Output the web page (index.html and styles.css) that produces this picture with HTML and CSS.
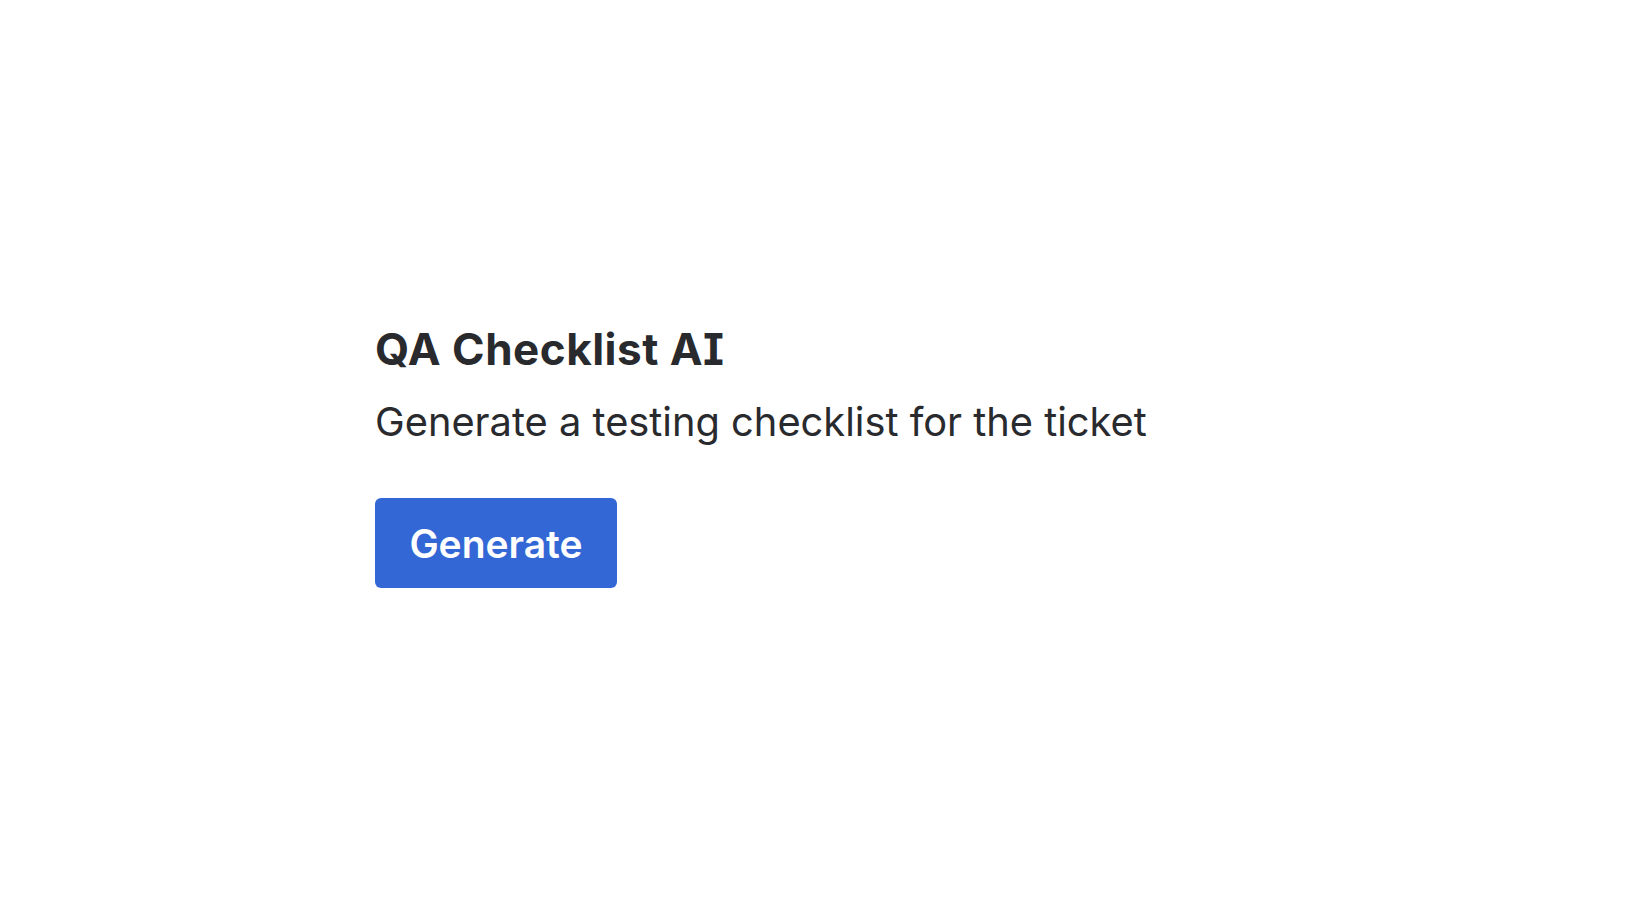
FILE: index.html
```html
<!DOCTYPE html>
<html lang="en">
<head>
  <meta charset="UTF-8" />
  <title>QA Checklist AI</title>
  <link rel="stylesheet" href="styles.css">
</head>
<body>

<div class="app">
  <h1 class="title">QA Checklist AI</h1>
  <p class="subtitle">Generate a testing checklist for the ticket</p>
  <button class="button" id="generateBtn">Generate</button>
</div>

</body>
</html>
```

FILE: styles.css
```css
body {
  margin: 0;
  background: #fff;
  color: #292a2e;
  font-family: Inter, "Noto Sans", sans-serif;
  /* serifed capital I, like Atlassian Sans */
  font-feature-settings: "cv08" 1;
}
.app {
  padding: 323px 0 0 375px;
}
.title {
  margin: 0;
  font-size: 44px;
  font-weight: 700;
  line-height: 52px;
  letter-spacing: 0.5px;
}
.subtitle {
  margin: 23px 0 0;
  font-size: 39.8px;
  font-weight: 400;
  line-height: 48px;
}
.button {
  margin-top: 52px;
  width: 242px;
  height: 90px;
  padding: 0;
  background: #3367d6;
  color: #fff;
  border: none;
  border-radius: 6px;
  font-family: inherit;
  font-feature-settings: inherit;
  font-size: 39px;
  font-weight: 600;
  cursor: pointer;
}
```
